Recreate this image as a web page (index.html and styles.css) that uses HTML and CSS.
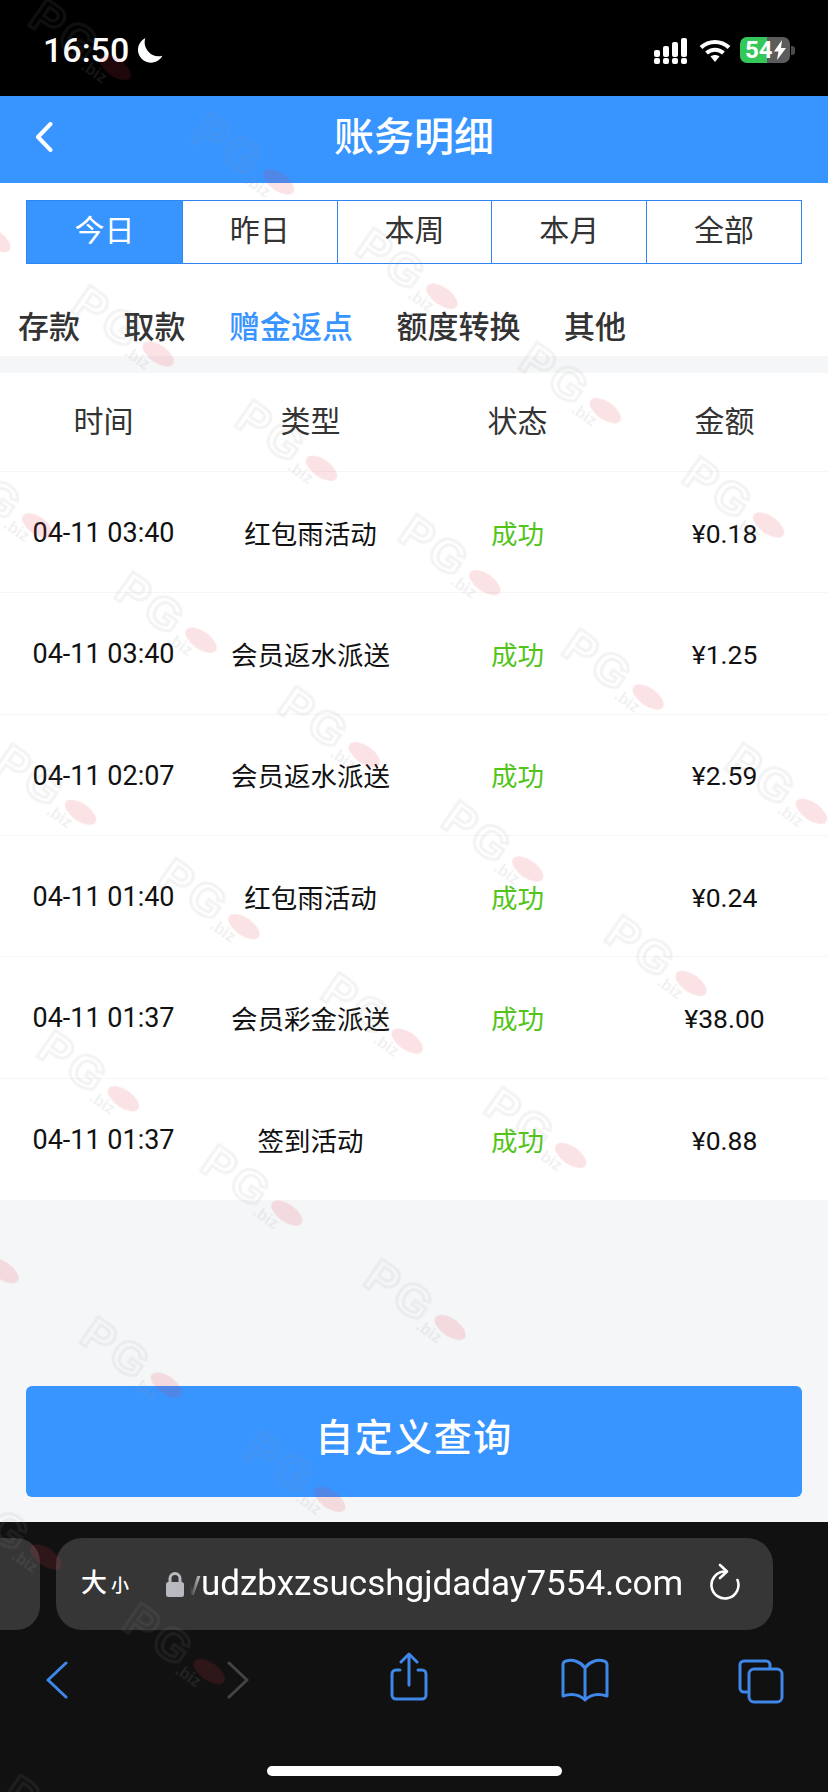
FILE: index.html
```html
<!DOCTYPE html>
<html lang="zh-CN">
<head>
<meta charset="utf-8">
<title>账务明细</title>
<link rel="stylesheet" href="styles.css">
</head>
<body>
<div class="phone">
  <div class="status">
    <div class="status-left">
      <span class="clock">16:50</span>
      <svg class="moon" viewBox="0 0 26 26"><path d="M9 1A12.500 12.500 0 1 0 25.500 18 13.500 13.500 0 0 1 9 1Z"/></svg>
    </div>
    <div class="status-right">
      <svg class="signal" viewBox="0 0 33 26"><g class="on"><rect x="0" y="12" width="6" height="7" rx="2"/><rect x="9" y="8" width="6" height="11" rx="2"/><rect x="18" y="4" width="6" height="15" rx="2"/><rect x="27" y="0" width="6" height="19" rx="2"/><rect x="0" y="20" width="6" height="6" rx="2"/><rect x="9" y="20" width="6" height="6" rx="2"/><rect x="18" y="20" width="6" height="6" rx="2"/><rect x="27" y="20" width="6" height="6" rx="2"/></g></svg>
      <svg class="wifi" viewBox="0 0 32 24"><path class="wifi-arc" d="M2 9.500C10 2 22 2 30 9.500M7.500 15c5-4.500 12-4.500 17 0"/><path class="wifi-dot" d="M11.500 18.500c2.700-2 6.300-2 9 0L16 24Z"/></svg>
      <div class="battery">
        <div class="battery-body"><span class="battery-num">54</span><svg class="bolt" viewBox="0 0 12 20"><path d="M8 0 0 11.500h4.500L3 20l9-12H7Z"/></svg></div>
        <span class="battery-nub"></span>
      </div>
    </div>
  </div>

  <header class="title-bar">
    <button class="back" aria-label="返回"><svg viewBox="0 0 18 30"><path d="M15.500 2 3 15l12.500 13"/></svg></button>
    <h1 class="title">账务明细</h1>
  </header>

  <div class="filters">
    <div class="periods">
      <a class="period active">今日</a>
      <a class="period">昨日</a>
      <a class="period">本周</a>
      <a class="period">本月</a>
      <a class="period">全部</a>
    </div>

    <nav class="tabs">
      <a class="tab">存款</a>
      <a class="tab">取款</a>
      <a class="tab active">赠金返点</a>
      <a class="tab">额度转换</a>
      <a class="tab">其他</a>
    </nav>
  </div>

  <div class="ledger">
    <div class="row head"><span>时间</span><span>类型</span><span>状态</span><span>金额</span></div>
    <div class="row"><span class="time">04-11 03:40</span><span>红包雨活动</span><span class="ok">成功</span><span class="money">¥0.18</span></div>
    <div class="row"><span class="time">04-11 03:40</span><span>会员返水派送</span><span class="ok">成功</span><span class="money">¥1.25</span></div>
    <div class="row"><span class="time">04-11 02:07</span><span>会员返水派送</span><span class="ok">成功</span><span class="money">¥2.59</span></div>
    <div class="row"><span class="time">04-11 01:40</span><span>红包雨活动</span><span class="ok">成功</span><span class="money">¥0.24</span></div>
    <div class="row"><span class="time">04-11 01:37</span><span>会员彩金派送</span><span class="ok">成功</span><span class="money">¥38.00</span></div>
    <div class="row"><span class="time">04-11 01:37</span><span>签到活动</span><span class="ok">成功</span><span class="money">¥0.88</span></div>
  </div>

  <div class="query-wrap"><button class="query">自定义查询</button></div>

  <div class="browser">
    <div class="address-row">
      <div class="prev-tab"></div>
      <div class="address">
        <span class="aa"><span class="aa-big">大</span><span class="aa-small">小</span></span>
        <svg class="lock" viewBox="0 0 18 26"><path class="lock-bow" d="M4 12V7.500a5 5 0 0 1 10 0V12"/><rect class="lock-body" x="0" y="11" width="18" height="15" rx="2.500"/></svg>
        <span class="url">vudzbxzsucshgjdaday7554.com</span>
        <svg class="reload" viewBox="0 0 32 38"><path d="M16 8.500A13.500 13.500 0 1 0 28.500 17"/><path d="M11 2l7 6.500-7 6.500"/></svg>
      </div>
    </div>
    <div class="tools">
      <svg class="tool t-back" viewBox="0 0 24 38"><path d="M21 2 3 19l18 17"/></svg>
      <svg class="tool t-forward" viewBox="0 0 24 38"><path d="M3 2l18 17L3 36"/></svg>
      <svg class="tool t-share" viewBox="0 0 40 50"><path d="M11 18H7a4 4 0 0 0-4 4v21a4 4 0 0 0 4 4h26a4 4 0 0 0 4-4V22a4 4 0 0 0-4-4h-4"/><path d="M20 33V3M12 10l8-8 8 8"/></svg>
      <svg class="tool t-book" viewBox="0 0 50 44"><path d="M25 10C21 4 13 1 6 3 4 3.500 3 5 3 7v31c9-3 17-1 22 4 5-5 13-7 22-4V7c0-2-1-3.500-3-4-7-2-15 1-19 7Zm0 0v32"/></svg>
      <svg class="tool t-tabs" viewBox="0 0 48 46"><path d="M10 34H7a4 4 0 0 1-4-4V7a4 4 0 0 1 4-4h22a4 4 0 0 1 4 4v3"/><rect x="12" y="11" width="33" height="33" rx="5"/></svg>
    </div>
    <div class="home-indicator"></div>
  </div>

  <svg class="watermark" aria-hidden="true">
    <defs>
      <pattern id="wm" width="199.4" height="210" patternUnits="userSpaceOnUse">
        <text class="wm-pg" x="22" y="46">PG</text>
        <ellipse class="wm-dot" cx="120" cy="31" rx="18" ry="9"/>
        <text class="wm-biz" x="92" y="52">.biz</text>
      </pattern>
    </defs>
    <g transform="translate(241 374) rotate(35)">
      <rect class="wm-fill" x="-598.2" y="-210" width="1395.8" height="1680"/>
    </g>
  </svg>
</div>
</body>
</html>
```
FILE: styles.css
```css
* { box-sizing: border-box; }
html, body { margin: 0; padding: 0; }
body {
  font-family: Roboto, "Noto Sans CJK SC", sans-serif;
  background: #f5f6f7;
}
.phone {
  position: relative;
  width: 828px;
  height: 1792px;
  display: flex;
  flex-direction: column;
  overflow: hidden;
  background: #f5f6f7;
}

/* status bar */
.status {
  height: 96px;
  flex: none;
  background: #000;
  color: #fff;
  display: flex;
  justify-content: space-between;
  align-items: center;
  padding: 4px 33px 0 43px;
}
.status-left { display: flex; align-items: center; gap: 7px; }
.clock { font-size: 34px; font-weight: 500; line-height: 40px; }
.moon { width: 27px; height: 27px; fill: #fff; }
.status-right { display: flex; align-items: center; gap: 12px; }
.signal { width: 33px; height: 26px; fill: #fff; margin-top: 2px; }
.wifi { width: 32px; height: 24px; margin-right: -3px; }
.wifi-arc { fill: none; stroke: #fff; stroke-width: 4; }
.wifi-dot { fill: #fff; }
.battery { display: flex; align-items: center; gap: 1px; }
.battery-body {
  width: 50px;
  height: 26px;
  border-radius: 7px;
  background: linear-gradient(90deg, #34c759 0 54%, #5c5c5c 54% 100%);
  display: flex;
  align-items: center;
  padding-left: 5px;
  gap: 1px;
  color: #fff;
}
.battery-num { font-size: 24px; line-height: 26px; font-weight: 700; }
.bolt { width: 12px; height: 20px; fill: #fff; }
.battery-nub { width: 4px; height: 9px; border-radius: 0 3px 3px 0; background: #4a4a4a; }

/* title */
.title-bar {
  position: relative;
  height: 87px;
  flex: none;
  background: #3894ff;
  display: flex;
  align-items: center;
  justify-content: center;
  padding-bottom: 3px;
}
.title { margin: 0; font-size: 40px; font-weight: 500; line-height: 50px; color: #fff; }
.back {
  position: absolute;
  left: 35px;
  top: 26px;
  width: 18px;
  height: 30px;
  padding: 0;
  border: 0;
  background: none;
}
.back svg { display: block; width: 18px; height: 30px; fill: none; stroke: #fff; stroke-width: 4; stroke-linecap: round; stroke-linejoin: round; }

/* filters: period switch and tabs on one white panel */
.filters { flex: none; background: #fff; padding-top: 17px; }
.periods {
  display: grid;
  grid-template-columns: repeat(5, 1fr);
  margin: 0 26px;
  height: 64px;
  border: 1px solid #2f86ee;
  background: #fff;
}
.period {
  display: flex;
  align-items: center;
  justify-content: center;
  font-size: 30px;
  color: #333;
  padding-bottom: 9px;
  border-left: 1.500px solid #2f86ee;
}
.period:first-child { border-left: 0; }
.period.active { background: #3894ff; color: #fff; }

.tabs {
  display: flex;
  gap: 43.500px;
  height: 92px;
  padding: 29px 0 0 18px;
  align-items: center;
  font-size: 31px;
  font-weight: 500;
  color: #333;
}
.tab.active { color: #3894ff; }

/* table */
.ledger { flex: none; margin-top: 17px; background: #fff; }
.row {
  display: grid;
  grid-template-columns: repeat(4, 207px);
  height: 121.330px;
  align-items: center;
  justify-items: center;
  font-size: 26.500px;
  color: #111;
  border-bottom: 1px solid #f6f6f6;
}
.row:last-child { border-bottom: 0; }
.row.head { height: 99px; font-size: 30px; color: #333; padding-bottom: 6px; }
.time { font-size: 27px; padding-top: 2px; }
.money { font-size: 26.500px; padding-top: 2px; }
.ok { color: #52c41a; }

/* button */
.query-wrap {
  flex: 1;
  display: flex;
  align-items: flex-end;
  padding: 0 26px 25px 26px;
}
.query {
  width: 100%;
  height: 111px;
  border: 0;
  border-radius: 6px;
  background: #3894ff;
  color: #fff;
  font-family: inherit;
  font-size: 38px;
  font-weight: 500;
  letter-spacing: 1.500px;
  padding: 0 0 15px;
}

/* browser chrome */
.browser {
  position: relative;
  flex: none;
  height: 270px;
  background: #111;
  padding-top: 16px;
}
.address-row { display: flex; gap: 16px; height: 92px; margin-left: -30px; }
.prev-tab { width: 70px; background: #363636; border-radius: 24px; flex: none; }
.address {
  width: 717px;
  flex: none;
  background: #363636;
  border-radius: 26px;
  display: flex;
  align-items: center;
  padding-left: 25px;
  color: #fff;
}
.aa { display: flex; align-items: baseline; width: 85px; flex: none; }
.aa-big { font-size: 26px; line-height: 30px; font-weight: 500; }
.aa-small { font-size: 18px; line-height: 30px; margin-left: 4px; font-weight: 500; }
.lock { width: 18px; height: 26px; flex: none; }
.lock-bow { fill: none; stroke: #b9b9c0; stroke-width: 3; }
.lock-body { fill: #b9b9c0; }
.url {
  flex: none;
  width: 498px;
  font-size: 35px;
  line-height: 44px;
  white-space: nowrap;
  -webkit-mask-image: linear-gradient(90deg, transparent 0, transparent 6px, #000 20px);
  mask-image: linear-gradient(90deg, transparent 0, transparent 6px, #000 20px);
}
.reload { width: 32px; height: 38px; flex: none; margin-left: 27px; margin-top: -5px; fill: none; stroke: #fff; stroke-width: 2.600; stroke-linecap: round; stroke-linejoin: round; }
.tools { position: relative; display: flex; height: 60px; margin-top: 20px; align-items: center; }
.tool { position: absolute; fill: none; stroke: #3f87e8; stroke-width: 3; stroke-linecap: round; stroke-linejoin: round; }
.t-back { left: 45px; width: 24px; height: 38px; }
.t-forward { left: 226px; width: 24px; height: 38px; stroke: #444; }
.t-share { left: 389px; width: 40px; height: 50px; top: 2px; }
.t-book { left: 560px; width: 50px; height: 44px; top: 8px; }
.t-tabs { left: 737px; width: 48px; height: 46px; top: 8px; }
.home-indicator {
  position: absolute;
  left: 267px;
  top: 244px;
  width: 295px;
  height: 10px;
  border-radius: 5px;
  background: #fff;
}

/* watermark overlay */
.watermark { position: absolute; left: 0; top: 0; width: 828px; height: 1792px; pointer-events: none; }
.wm-fill { fill: url(#wm); }
.wm-pg { font-family: "Liberation Sans", sans-serif; font-size: 46px; font-weight: 700; letter-spacing: 4px; fill: none; stroke: rgba(150, 150, 150, .11); stroke-width: 3; }
.wm-dot { fill: rgba(225, 50, 70, .14); }
.wm-biz { font-family: "Liberation Sans", sans-serif; font-size: 16px; font-weight: 700; fill: rgba(150, 150, 150, .14); }
```
